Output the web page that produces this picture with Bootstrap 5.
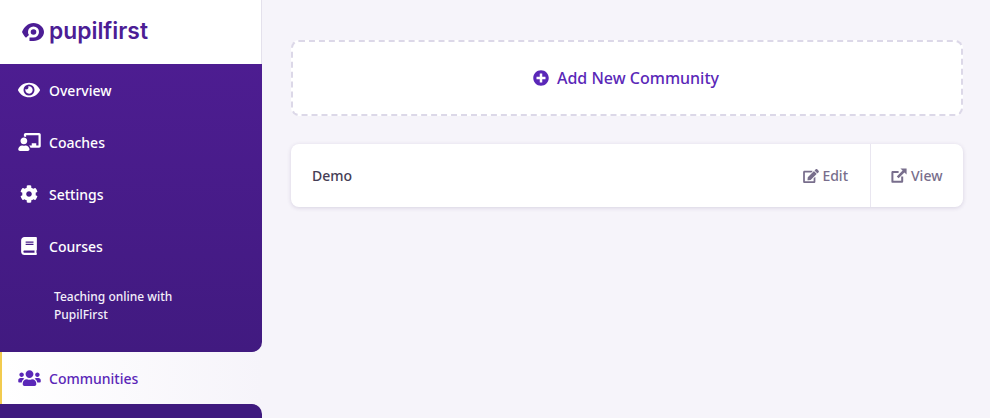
<!DOCTYPE html>
<html lang="en">
<head>
    <meta charset="UTF-8">
    <meta name="viewport" content="width=device-width, initial-scale=1.0">
    <title>Communities</title>
    <link href="https://cdn.jsdelivr.net/npm/bootstrap@5.3.0/dist/css/bootstrap.min.css" rel="stylesheet">
    <style>
        body {
            font-family: "Noto Sans", sans-serif;
            background-color: #f6f4fa;
            height: 418px;
            overflow: hidden;
        }
        .side-bar {
            width: 262px;
            height: 418px;
            flex-shrink: 0;
        }
        .logo-box {
            height: 64px;
            background-color: #fff;
            border-right: 1px solid #e4e1ec;
            padding-left: 22px;
            gap: 5px;
        }
        .logo-word {
            font-family: "Inter", sans-serif;
            font-weight: 600;
            font-size: 22.8px;
            line-height: 1;
            color: #4c1d95;
            padding-bottom: 2px;
        }
        .side-top {
            background: linear-gradient(180deg, #4d1d91 0%, #411a80 100%);
            border-bottom-right-radius: 10px;
            height: 288px;
        }
        .side-bottom {
            background-color: #3f1a7e;
            border-top-right-radius: 10px;
            flex-grow: 1;
        }
        .side-link {
            height: 52px;
            padding: 0 0 0 17px;
            gap: 8px;
            color: #fff;
            font-size: 14px;
            font-weight: 500;
        }
        .side-link:hover { color: #fff; }
        .side-link svg { fill: currentColor; }
        .icon-slot {
            width: 24px;
            display: flex;
            justify-content: center;
        }
        .side-sub {
            padding: 16px 60px 0 54px;
            color: #f3effa;
            font-size: 12px;
            font-weight: 500;
            line-height: 18px;
        }
        .side-active {
            height: 52px;
            padding-left: 15px;
            color: #5a27b8;
            background: linear-gradient(90deg, #fff 0%, #f6f4fa 100%);
            border-left: 2px solid #f2cb4f;
        }
        .side-active:hover { color: #5a27b8; }
        .main-area {
            padding: 40px 27px 0 29px;
        }
        .add-box {
            height: 76px;
            background-color: #fff;
            border: 2px dashed #dcd8e8;
            border-radius: 8px;
            color: #5a27b8;
            font-size: 16px;
            font-weight: 500;
            gap: 8px;
            padding-right: 2px;
            text-decoration: none;
        }
        .add-box:hover { color: #5a27b8; }
        .row-card {
            margin-top: 28px;
            height: 63px;
            background-color: #fff;
            border: 0;
            border-radius: 8px;
            box-shadow: 0 1px 4px rgba(60, 40, 100, 0.16);
        }
        .row-name {
            padding-left: 21px;
            font-size: 14px;
            font-weight: 500;
            color: #453d55;
        }
        .row-action {
            font-size: 14px;
            font-weight: 500;
            color: #786e8c;
            text-decoration: none;
            gap: 3px;
        }
        .row-action:hover { color: #786e8c; }
        .row-action svg { fill: currentColor; }
        .act-edit { padding: 0 22px 0 20px; }
        .act-view {
            width: 93px;
            padding-left: 20px;
            gap: 4px;
            border-left: 1px solid #e9e6f0;
        }
    </style>
</head>
<body>
    <div class="d-flex">
        <!-- Sidebar -->
        <div class="side-bar d-flex flex-column">
            <div class="logo-box d-flex align-items-center">
                <svg width="22" height="18" viewBox="0 0 22 18" aria-hidden="true">
                    <path fill="#4c1d95" d="M11.5 0C17 0 22 4 22 9 22 14 17 18 11.5 18H7.5V14.5H11.5A5.5 5.5 0 1 0 6 9C6 10.2 6.3 11.2 7 12L4 14.8C2.2 13.2 1 11 0 9 2 4 6 0 11.5 0Z"/>
                    <circle fill="#4c1d95" cx="11.5" cy="9" r="2.8"/>
                </svg>
                <span class="logo-word">pupilfirst</span>
            </div>
            <div class="side-top">
                <nav class="nav flex-column">
                    <a class="nav-link side-link d-flex align-items-center" href="#">
                        <span class="icon-slot"><svg width="22" height="20" viewBox="0 0 576 512"><path d="M572.52 241.4C518.29 135.59 410.93 64 288 64S57.68 135.64 3.48 241.41a32.35 32.35 0 0 0 0 29.19C57.71 376.41 165.07 448 288 448s230.32-71.64 284.52-177.41a32.35 32.35 0 0 0 0-29.19zM288 400a144 144 0 1 1 144-144 143.93 143.93 0 0 1-144 144zm0-240a95.31 95.31 0 0 0-25.31 3.79 47.85 47.85 0 0 1-66.9 66.9A95.78 95.78 0 1 0 288 160z"/></svg></span>
                        Overview
                    </a>
                    <a class="nav-link side-link d-flex align-items-center" href="#">
                        <span class="icon-slot"><svg width="23" height="18" viewBox="0 0 640 512"><path d="M208 352c-2.39 0-4.78.35-7.06 1.09C187.98 357.3 174.35 360 160 360c-14.35 0-27.98-2.7-40.95-6.91-2.28-.74-4.66-1.09-7.05-1.09C49.94 352-.33 402.48 0 464.62.14 490.88 21.73 512 48 512h224c26.27 0 47.86-21.12 48-47.38.33-62.14-49.94-112.62-112-112.62zm-48-32c53.02 0 96-42.98 96-96s-42.98-96-96-96-96 42.98-96 96 42.98 96 96 96zM592 0H208c-26.47 0-48 22.25-48 49.59V96c23.42 0 45.1 6.78 64 17.8V64h352v288h-64v-64H384v64h-76.24c19.1 16.69 33.12 38.73 39.69 64H592c26.47 0 48-22.25 48-49.59V49.59C640 22.25 618.47 0 592 0z"/></svg></span>
                        Coaches
                    </a>
                    <a class="nav-link side-link d-flex align-items-center" href="#">
                        <span class="icon-slot"><svg width="18" height="18" viewBox="0 0 512 512"><path d="M487.4 315.7l-42.6-24.6c4.3-23.2 4.3-47 0-70.2l42.6-24.6c4.9-2.8 7.1-8.6 5.5-14-11.1-35.6-30-67.8-54.7-94.6-3.8-4.1-10-5.1-14.8-2.3L380.8 110c-17.9-15.4-38.5-27.3-60.8-35.1V25.8c0-5.6-3.9-10.5-9.4-11.7-36.7-8.2-74.3-7.8-109.2 0-5.5 1.2-9.4 6.1-9.4 11.7V75c-22.2 7.9-42.8 19.8-60.8 35.1L88.7 85.5c-4.9-2.8-11-1.9-14.8 2.3-24.7 26.7-43.6 58.9-54.7 94.6-1.7 5.4.6 11.2 5.5 14L67.3 221c-4.3 23.2-4.3 47 0 70.2l-42.6 24.6c-4.9 2.8-7.1 8.6-5.5 14 11.1 35.6 30 67.8 54.7 94.6 3.8 4.1 10 5.1 14.8 2.3l42.6-24.6c17.9 15.4 38.5 27.3 60.8 35.1v49.2c0 5.6 3.9 10.5 9.4 11.7 36.7 8.2 74.3 7.8 109.2 0 5.5-1.2 9.4-6.1 9.4-11.7v-49.2c22.2-7.9 42.8-19.8 60.8-35.1l42.6 24.6c4.9 2.8 11 1.9 14.8-2.3 24.7-26.7 43.6-58.9 54.7-94.6 1.5-5.5-.7-11.3-5.6-14.1zM256 336c-44.1 0-80-35.9-80-80s35.9-80 80-80 80 35.9 80 80-35.9 80-80 80z"/></svg></span>
                        Settings
                    </a>
                    <a class="nav-link side-link d-flex align-items-center" href="#">
                        <span class="icon-slot"><svg width="16" height="18" viewBox="0 0 448 512"><path d="M448 360V24c0-13.3-10.7-24-24-24H96C43 0 0 43 0 96v320c0 53 43 96 96 96h328c13.3 0 24-10.7 24-24v-16c0-7.5-3.5-14.3-8.9-18.7-4.2-15.4-4.2-59.3 0-74.7 5.4-4.3 8.9-11.1 8.9-18.6zM128 134c0-3.3 2.7-6 6-6h212c3.3 0 6 2.7 6 6v20c0 3.3-2.7 6-6 6H134c-3.3 0-6-2.7-6-6v-20zm0 64c0-3.3 2.7-6 6-6h212c3.3 0 6 2.7 6 6v20c0 3.3-2.7 6-6 6H134c-3.3 0-6-2.7-6-6v-20zm253.4 250H96c-17.7 0-32-14.3-32-32 0-17.6 14.4-32 32-32h285.4c-1.9 17.1-1.9 46.9 0 64z"/></svg></span>
                        Courses
                    </a>
                    <div class="side-sub">Teaching online with PupilFirst</div>
                </nav>
            </div>
            <a class="nav-link side-link side-active d-flex align-items-center" href="#">
                <span class="icon-slot"><svg width="23" height="18" viewBox="0 0 640 512"><path d="M96 224c35.3 0 64-28.7 64-64s-28.7-64-64-64-64 28.7-64 64 28.7 64 64 64zm448 0c35.3 0 64-28.7 64-64s-28.7-64-64-64-64 28.7-64 64 28.7 64 64 64zm32 32h-64c-17.6 0-33.5 7.1-45.1 18.6 40.3 22.1 68.9 62 75.1 109.4h66c17.7 0 32-14.3 32-32v-32c0-35.3-28.7-64-64-64zm-256 0c61.9 0 112-50.1 112-112S381.9 32 320 32 208 82.1 208 144s50.1 112 112 112zm76.8 32h-8.3c-20.8 10-43.9 16-68.5 16s-47.6-6-68.5-16h-8.3C179.6 288 128 339.6 128 403.2V432c0 26.5 21.5 48 48 48h288c26.5 0 48-21.5 48-48v-28.8c0-63.6-51.6-115.2-115.2-115.2zm-223.7-13.4C161.5 263.1 145.6 256 128 256H64c-35.3 0-64 28.7-64 64v32c0 17.7 14.3 32 32 32h65.9c6.3-47.4 34.9-87.3 75.2-109.4z"/></svg></span>
                Communities
            </a>
            <div class="side-bottom"></div>
        </div>

        <!-- Main -->
        <div class="main-area flex-grow-1">
            <a class="add-box d-flex align-items-center justify-content-center" href="#">
                <svg width="16" height="16" viewBox="0 0 512 512" fill="#5a27b8"><path d="M256 8C119 8 8 119 8 256s111 248 248 248 248-111 248-248S393 8 256 8zm144 276c0 6.6-5.4 12-12 12h-92v92c0 6.6-5.4 12-12 12h-56c-6.6 0-12-5.4-12-12v-92h-92c-6.6 0-12-5.4-12-12v-56c0-6.6 5.4-12 12-12h92v-92c0-6.6 5.4-12 12-12h56c6.6 0 12 5.4 12 12v92h92c6.6 0 12 5.4 12 12v56z"/></svg>
                Add New Community
            </a>
            <div class="card row-card d-flex flex-row align-items-stretch">
                <div class="row-name flex-grow-1 d-flex align-items-center">Demo</div>
                <a class="row-action act-edit d-flex align-items-center" href="#">
                    <svg width="16" height="14" viewBox="0 0 576 512"><path d="M402.6 83.2l90.2 90.2c3.8 3.8 3.8 10 0 13.8L274.4 405.6l-92.8 10.3c-12.4 1.4-22.9-9.1-21.5-21.5l10.3-92.8L388.8 83.2c3.8-3.8 10-3.8 13.8 0zm162-22.9l-48.8-48.8c-15.2-15.2-39.9-15.2-55.2 0l-35.4 35.4c-3.8 3.8-3.8 10 0 13.8l90.2 90.2c3.8 3.8 10 3.8 13.8 0l35.4-35.4c15.2-15.3 15.2-40 0-55.2zM384 346.2V448H64V128h229.8c3.2 0 6.2-1.3 8.5-3.5l40-40c7.6-7.6 2.2-20.5-8.5-20.5H48C21.5 64 0 85.5 0 112v352c0 26.5 21.5 48 48 48h352c26.5 0 48-21.5 48-48V306.2c0-10.7-12.9-16-20.5-8.5l-40 40c-2.2 2.3-3.5 5.3-3.5 8.5z"/></svg>
                    Edit
                </a>
                <a class="row-action act-view d-flex align-items-center" href="#">
                    <svg width="16" height="15" viewBox="0 0 16 15"><path d="M1.6 3H7.6V5H2.4V12.8H10.2V8.4H12.2V13.2C12.2 14.2 11.6 14.8 10.6 14.8H1.6C.7 14.8 .4 14.2 .4 13.2V4.6C.4 3.6 .7 3 1.6 3Z"/><path d="M9.4 .4H15.6V6.6L13.4 4.4 7.6 10.2 5.8 8.4 11.6 2.6Z"/></svg>
                    View
                </a>
            </div>
        </div>
    </div>

    <script src="https://cdn.jsdelivr.net/npm/bootstrap@5.3.0/dist/js/bootstrap.bundle.min.js"></script>
</body>
</html>
